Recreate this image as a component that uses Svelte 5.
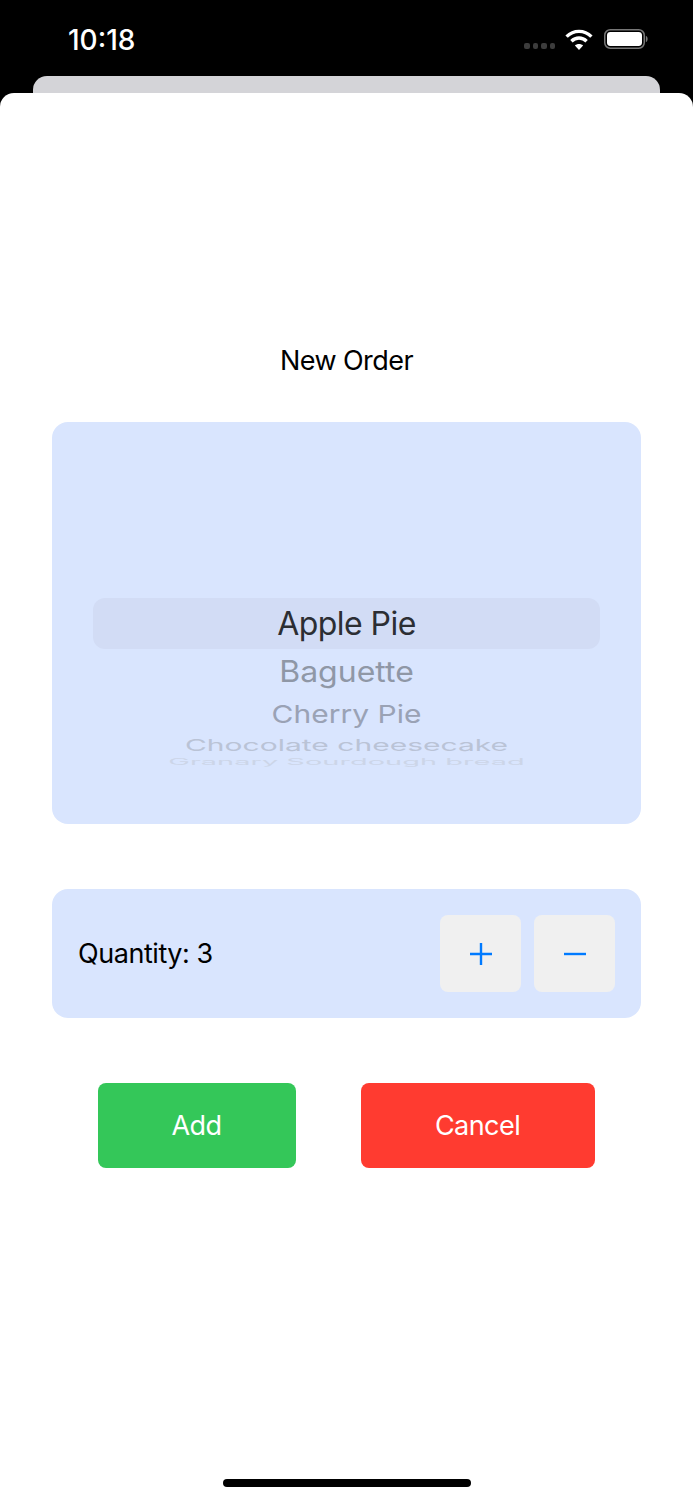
<script>
  let quantity = $state(3)

  // wheel rows below the selected one, squashed like the native picker
  const wheel = [
    { name: 'Baguette', height: 45, size: 32, scale: 0.92, color: '#8f97a6' },
    { name: 'Cherry Pie', height: 39, size: 30, scale: 0.83, color: '#9aa2b5' },
    { name: 'Chocolate cheesecake', height: 24, size: 30, scale: 0.55, color: '#bac3d6' },
    { name: 'Granary Sourdough bread', height: 8, size: 29, scale: 0.3, color: '#ccd5e8' }
  ]
</script>

<div class="screen">
  <header class="status">
    <span class="time">10:18</span>
    <div class="status-icons">
      <div class="dots"><i></i><i></i><i></i><i></i></div>
      <svg class="wifi" width="28" height="21" viewBox="0 0 28 21" fill="none" stroke="#fff" stroke-width="3.4">
        <path d="M1.6 7.6C8.6 0.6 19.4 0.6 26.4 7.6" />
        <path d="M6.4 12.2C10.8 8 17.2 8 21.6 12.2" />
        <path d="M14 21L9.9 16.6C12.2 14.6 15.8 14.6 18.1 16.6Z" fill="#fff" stroke="none" />
      </svg>
      <svg class="battery" width="44" height="20" viewBox="0 0 44 20">
        <rect x="0.75" y="0.75" width="39.5" height="18.5" rx="5.5" fill="none" stroke="#777" stroke-width="1.5" />
        <rect x="3" y="3" width="35" height="14" rx="3.4" fill="#fff" />
        <path d="M41.8 6.8C43 7.2 43.6 8.4 43.6 10S43 12.8 41.8 13.2Z" fill="#777" />
      </svg>
    </div>
  </header>

  <div class="back-card"></div>

  <main class="sheet">
    <h1 class="title">New Order</h1>

    <section class="panel picker">
      <div class="row selected">Apple Pie</div>
      {#each wheel as item}
        <div class="row" style="height: {item.height}px; font-size: {item.size}px">
          <span style="transform: scaleY({item.scale}); color: {item.color}">{item.name}</span>
        </div>
      {/each}
    </section>

    <section class="panel stepper">
      <span class="qty">Quantity: {quantity}</span>
      <div class="step-buttons">
        <button class="step" aria-label="Increase" onclick={() => quantity++}>
          <svg width="24" height="24" viewBox="0 0 24 24" stroke="#007aff" stroke-width="2.4">
            <path d="M1 12H23M12 1V23" />
          </svg>
        </button>
        <button class="step" aria-label="Decrease" onclick={() => quantity--}>
          <svg width="24" height="24" viewBox="0 0 24 24" stroke="#007aff" stroke-width="2.4">
            <path d="M1 12H23" />
          </svg>
        </button>
      </div>
    </section>

    <div class="actions">
      <button class="action add">Add</button>
      <button class="action cancel">Cancel</button>
    </div>

    <div class="home-bar"></div>
  </main>
</div>

<style>
  :global(body) {
    background: #000;
    font-family: Inter, "Liberation Sans", sans-serif;
  }

  .screen {
    display: flex;
    flex-direction: column;
    height: 100vh;
    overflow: hidden;
  }

  .status {
    display: flex;
    align-items: flex-start;
    justify-content: space-between;
    height: 76px;
    padding: 24px 45px 0 68px;
    box-sizing: border-box;
  }

  .time {
    color: #fff;
    font-size: 28px;
    font-weight: 500;
    line-height: 32px;
  }

  .status-icons {
    display: flex;
    align-items: flex-start;
    padding-top: 5px;
  }

  .dots {
    display: flex;
    gap: 3px;
    margin: 14px 10px 0 0;
  }

  .dots i {
    width: 5.5px;
    height: 6px;
    border-radius: 2px;
    background: #3c3c3c;
  }

  .wifi {
    margin-right: 11px;
  }

  .back-card {
    height: 17px;
    margin: 0 33px;
    flex-shrink: 0;
    background: #d4d4d8;
    border-radius: 14px 14px 0 0;
  }

  .sheet {
    flex: 1;
    display: flex;
    flex-direction: column;
    align-items: center;
    background: #fff;
    border-radius: 14px 14px 0 0;
  }

  .title {
    margin: 252px 0 46px;
    font-size: 27px;
    font-weight: 400;
    line-height: 31px;
    letter-spacing: -0.55px;
    color: #000;
  }

  .panel {
    width: 589px;
    background: #d9e5fe;
    border-radius: 16px;
    box-sizing: border-box;
  }

  .picker {
    height: 402px;
    padding: 176px 41px 0;
    margin-bottom: 65px;
  }

  .row {
    display: flex;
    align-items: center;
    justify-content: center;
    white-space: nowrap;
    font-size: 32px;
    line-height: 1;
  }

  .row span {
    display: block;
    flex-shrink: 0;
  }

  .selected {
    height: 51px;
    color: #2c2e33;
    background: #d2dcf5;
    border-radius: 12px;
    letter-spacing: -0.55px;
  }

  .stepper {
    display: flex;
    align-items: center;
    justify-content: space-between;
    height: 129px;
    padding: 0 26px;
    margin-bottom: 65px;
  }

  .qty {
    font-size: 27px;
    letter-spacing: -0.45px;
    color: #000;
  }

  .step-buttons {
    display: flex;
    gap: 13px;
  }

  .step {
    display: flex;
    align-items: center;
    justify-content: center;
    width: 81px;
    height: 77px;
    padding: 0;
    border: none;
    border-radius: 8px;
    background: #f0f0f0;
  }

  .actions {
    display: flex;
    gap: 65px;
    margin-left: -1px;
  }

  .action {
    height: 85px;
    border: none;
    border-radius: 8px;
    color: #fff;
    font-family: inherit;
    font-size: 27px;
    letter-spacing: -0.55px;
  }

  .add {
    width: 198px;
    background: #34c759;
  }

  .cancel {
    width: 234px;
    background: #ff3b30;
  }

  .home-bar {
    width: 248px;
    height: 8px;
    margin-top: auto;
    margin-bottom: 13px;
    border-radius: 4px;
    background: #000;
  }
</style>
